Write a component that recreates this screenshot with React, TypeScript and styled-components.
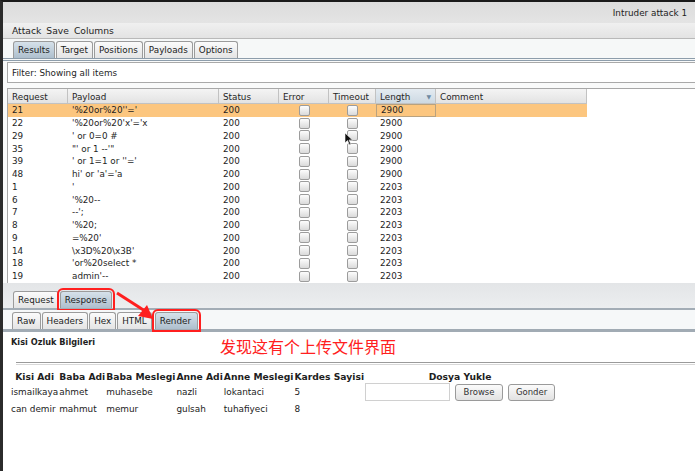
import React from 'react';
import styled, { createGlobalStyle } from 'styled-components';

const Global = createGlobalStyle`
  html, body { margin: 0; padding: 0; background: #fff; }
  body { font-family: "DejaVu Sans", "Noto Sans", sans-serif; }
`;

const Frame = styled.div`
  position: relative;
  width: 695px;
  height: 471px;
  overflow: hidden;
  box-sizing: border-box;
  border-top: 2px solid #1a1a1a;
  border-left: 3px solid #2b2b2b;
  display: flex;
  flex-direction: column;
  background: #f9fafa;
  font-family: "DejaVu Sans", sans-serif;
  font-size: 8.8px;
  color: #1e1e1e;
`;

const TitleBar = styled.div`
  height: 21px;
  flex: none;
  background: linear-gradient(#dcdcdc, #e4e4e4);
  display: flex;
  align-items: center;
  justify-content: flex-end;
  padding-right: 8px;
  color: #222;
`;

const MenuBar = styled.div`
  height: 15px;
  flex: none;
  display: flex;
  gap: 5px;
  align-items: center;
  padding-left: 9px;
  font-size: 9.2px;
  background: linear-gradient(#f0f0f0, #e3e3e3);
  border-bottom: 1px solid #b9b9b9;
`;

const Strip = styled.div<{ $bg: string; $pad: number; $h: number; $line: string }>`
  flex: none;
  height: ${p => p.$h}px;
  display: flex;
  align-items: flex-end;
  gap: 1px;
  padding-left: ${p => p.$pad}px;
  background: ${p => p.$bg};
  border-bottom: ${p => p.$line};
`;

const Tab = styled.div<{ $active?: boolean; $marked?: boolean }>`
  height: 16px;
  display: flex;
  align-items: center;
  padding: 0 4px;
  border: 1px solid #9b9b9b;
  border-bottom: none;
  border-radius: 3px 3px 0 0;
  color: #1c1c1c;
  background: ${p => (p.$active ? 'linear-gradient(#d6e1ea, #aebfcd)' : 'linear-gradient(#fbfbfb, #e4e4e4)')};
  outline: ${p => (p.$marked ? '2px solid #ff1f1f' : 'none')};
  outline-offset: 1px;
`;

const Panel = styled.div`
  flex: none;
  display: flex;
  flex-direction: column;
  padding-left: 4px;
  background: #f9fafa;
`;

const Filter = styled.div`
  margin-top: 1px;
  margin-right: -2px;
  height: 19px;
  display: flex;
  align-items: center;
  padding-left: 4px;
  border: 1px solid #a9a9a9;
  background: #fff;
`;

const TableBox = styled.div`
  margin-top: 5px;
  border-top: 1px solid #a7a7a7;
  border-left: 1px solid #a7a7a7;
  background: #fff;
  height: 194px;
`;

const Grid = styled.div<{ $sel?: boolean; $head?: boolean }>`
  display: grid;
  grid-template-columns: 60px 151px 60px 50px 47px 60px 151px;
  width: 579px;
  height: ${p => (p.$head ? '15px' : '12.75px')};
  background: ${p => (p.$sel ? '#fcc67f' : 'transparent')};
`;

const HeadCell = styled.div<{ $sorted?: boolean }>`
  display: flex;
  align-items: center;
  justify-content: space-between;
  padding: 1px 4px 0;
  border-right: 1px solid #c2c2c2;
  border-bottom: 1px solid #c2c2c2;
  background: ${p => (p.$sorted ? 'linear-gradient(#e4ebf1, #cdd9e3)' : 'linear-gradient(#f4f4f4, #e3e3e3)')};
  color: #262626;
`;

const SortArrow = styled.span`
  font-size: 6px;
  color: #6f8aa3;
`;

const Cell = styled.div<{ $focus?: boolean; $center?: boolean }>`
  display: flex;
  align-items: center;
  justify-content: ${p => (p.$center ? 'center' : 'flex-start')};
  padding-left: ${p => (p.$center ? 0 : 4)}px;
  white-space: pre;
  overflow: hidden;
  box-sizing: border-box;
  border: ${p => (p.$focus ? '1px solid #b9a27f' : 'none')};
`;

const Check = styled.div`
  width: 9px;
  height: 9px;
  border: 1px solid #9c9c9c;
  border-radius: 2px;
  background: linear-gradient(#fdfdfd, #dadada);
`;

const Content = styled.div`
  flex: 1;
  background: #fff;
  padding: 5px 0 0 8px;
  display: flex;
  flex-direction: column;
`;

const PageTitle = styled.div`
  font-weight: bold;
  font-size: 8.2px;
  height: 10px;
  line-height: 10px;
`;

const Rule = styled.div`
  margin: 15px 0 0 5px;
  height: 1px;
  border-top: 1px solid #9a9a9a;
  border-bottom: 1px solid #d8d8d8;
`;

const RTable = styled.div`
  display: grid;
  grid-template-columns: repeat(7, auto);
  grid-template-rows: 13px 18px 15px;
  justify-content: start;
  align-items: center;
  column-gap: 1px;
  margin-top: 5px;
`;

const RHead = styled.div`
  font-weight: bold;
  font-size: 9.2px;
  text-align: center;
  white-space: nowrap;
`;

const RCell = styled.div`
  white-space: nowrap;
  font-size: 8.9px;
  color: #222;
`;

const Upload = styled.div`
  display: flex;
  align-items: center;
  gap: 5px;
`;

const FileInput = styled.div`
  width: 83px;
  height: 16px;
  border: 1px solid #d0d0d0;
  background: #fff;
`;

const Btn = styled.div<{ $w: number }>`
  width: ${p => p.$w}px;
  height: 17px;
  box-sizing: border-box;
  display: flex;
  align-items: center;
  justify-content: center;
  border: 1px solid #9a9a9a;
  border-radius: 3px;
  background: linear-gradient(#fbfbfb, #e2e2e2);
  font-size: 8.5px;
  color: #333;
`;

const Note = styled.div`
  position: absolute;
  left: 217px;
  top: 334px;
  font-family: "Noto Sans CJK SC", sans-serif;
  font-size: 16px;
  line-height: 20px;
  color: #ff2020;
`;

const Overlay = styled.svg`
  position: absolute;
  pointer-events: none;
`;

const rows: [string, string, string][] = [
  ['21', "'%20or%20''='", '2900'],
  ['22', "'%20or%20'x'='x", '2900'],
  ['29', "' or 0=0 #", '2900'],
  ['35', `"' or 1 --'"`, '2900'],
  ['39', "' or 1=1 or ''='", '2900'],
  ['48', "hi' or 'a'='a", '2900'],
  ['1', "'", '2203'],
  ['6', "'%20--", '2203'],
  ['7', "--';", '2203'],
  ['8', "'%20;", '2203'],
  ['9', "=%20'", '2203'],
  ['14', '\\x3D%20\\x3B\'', '2203'],
  ['18', "'or%20select *", '2203'],
  ['19', "admin'--", '2203'],
];

const people = [
  ['ismailkaya', 'ahmet', 'muhasebe', 'nazli', 'lokantaci', '5'],
  ['can demir', 'mahmut', 'memur', 'gulsah', 'tuhafiyeci', '8'],
];

const heads = ['Kisi Adi', 'Baba Adi', 'Baba Meslegi', 'Anne Adi', 'Anne Meslegi', 'Kardes Sayisi', 'Dosya Yukle'];

export default function App() {
  return (
    <>
      <Global />
      <Frame>
        <TitleBar>Intruder attack 1</TitleBar>
        <MenuBar>
          <span>Attack</span>
          <span>Save</span>
          <span>Columns</span>
        </MenuBar>
        <Strip $bg="#f6f8f8" $pad={10} $h={19} $line="3px double #8d9dab">
          <Tab $active>Results</Tab>
          <Tab>Target</Tab>
          <Tab>Positions</Tab>
          <Tab>Payloads</Tab>
          <Tab>Options</Tab>
        </Strip>
        <Panel>
          <Filter>Filter: Showing all items</Filter>
          <TableBox>
            <Grid $head>
              <HeadCell>Request</HeadCell>
              <HeadCell>Payload</HeadCell>
              <HeadCell>Status</HeadCell>
              <HeadCell>Error</HeadCell>
              <HeadCell>Timeout</HeadCell>
              <HeadCell $sorted>
                Length<SortArrow>▼</SortArrow>
              </HeadCell>
              <HeadCell>Comment</HeadCell>
            </Grid>
            {rows.map(([id, payload, len], i) => (
              <Grid key={id} $sel={i === 0}>
                <Cell>{id}</Cell>
                <Cell>{payload}</Cell>
                <Cell>200</Cell>
                <Cell $center>
                  <Check />
                </Cell>
                <Cell $center>
                  <Check />
                </Cell>
                <Cell $focus={i === 0}>{len}</Cell>
                <Cell />
              </Grid>
            ))}
          </TableBox>
        </Panel>
        <Strip $bg="linear-gradient(#e3e5e7, #eceef0)" $pad={10} $h={25} $line="2px solid #a3adb6">
          <Tab>Request</Tab>
          <Tab $active $marked>
            Response
          </Tab>
        </Strip>
        <Strip $bg="#f6f8f9" $pad={9} $h={19} $line="3px solid #a1abb4">
          <Tab>Raw</Tab>
          <Tab>Headers</Tab>
          <Tab>Hex</Tab>
          <Tab>HTML</Tab>
          <Tab $active $marked style={{ marginLeft: 2, paddingRight: 6 }}>
            Render
          </Tab>
        </Strip>
        <Content>
          <PageTitle>Kisi Ozluk Bilgileri</PageTitle>
          <Rule />
          <RTable>
            {heads.map(h => (
              <RHead key={h}>{h}</RHead>
            ))}
            {people[0].map((v, i) => (
              <RCell key={'a' + i}>{v}</RCell>
            ))}
            <Upload>
              <FileInput />
              <Btn $w={48}>Browse</Btn>
              <Btn $w={47}>Gonder</Btn>
            </Upload>
            {people[1].map((v, i) => (
              <RCell key={'b' + i}>{v}</RCell>
            ))}
            <RCell />
          </RTable>
        </Content>
        <Note>发现这有个上传文件界面</Note>
        <Overlay width="46" height="36" viewBox="0 0 46 36" style={{ left: 110, top: 287 }}>
          <line x1="4" y1="4" x2="32" y2="22" stroke="#ff1f1f" strokeWidth="3" />
          <polygon points="40,30 25,27 34,16" fill="#ff1f1f" />
        </Overlay>
        <Overlay width="10" height="14" viewBox="0 0 10 14" style={{ left: 341, top: 130 }}>
          <path d="M1 1 L1 11 L3.5 8.5 L5.5 13 L7 12.3 L5 8 L8.5 8 Z" fill="#111" stroke="#fff" strokeWidth="0.6" />
        </Overlay>
      </Frame>
    </>
  );
}
